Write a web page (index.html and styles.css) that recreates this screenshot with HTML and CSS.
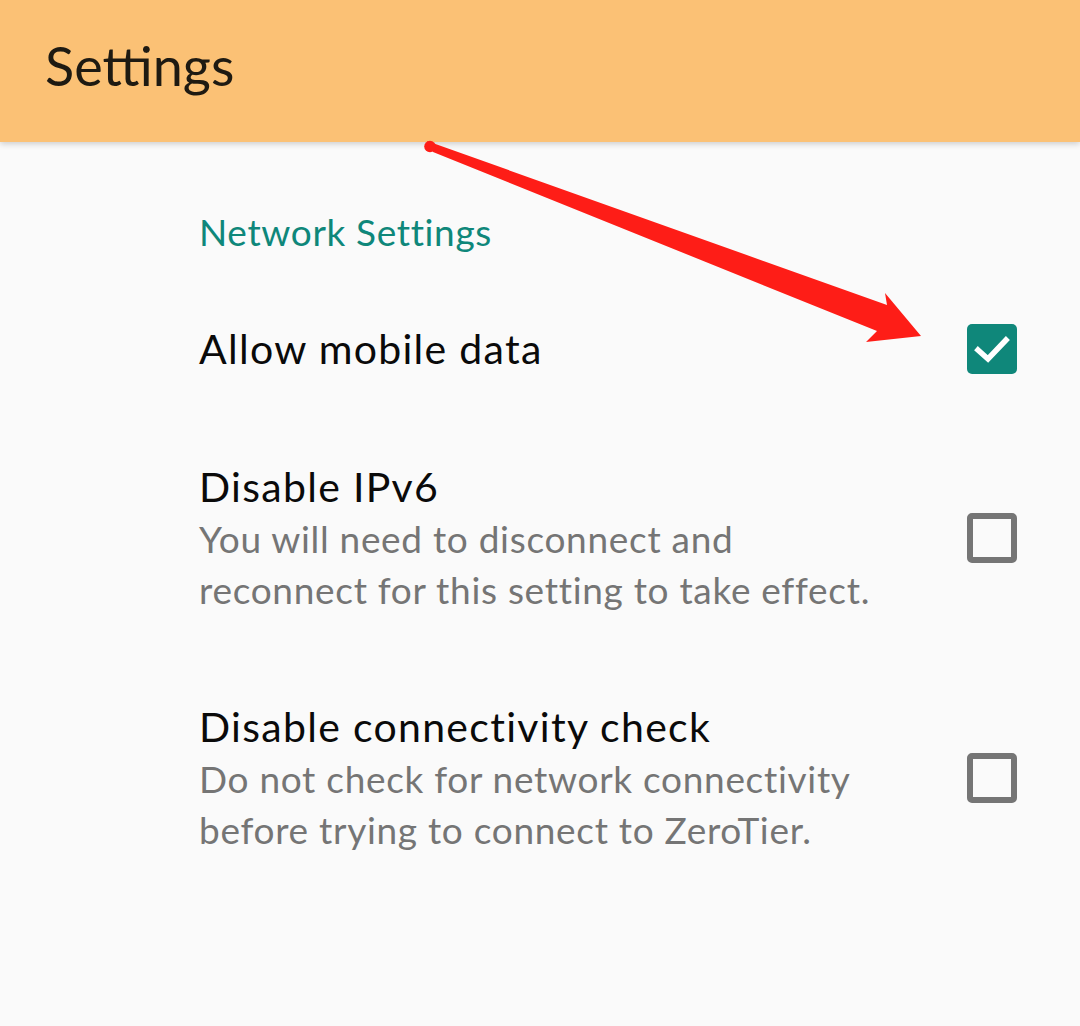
FILE: index.html
```html
<!DOCTYPE html>
<html>
<head>
<meta charset="utf-8">
<link rel="stylesheet" href="styles.css">
</head>
<body>
<div class="app">
  <header class="toolbar"><h1 class="toolbar-title">Settings</h1></header>
  <main class="prefs">
    <div class="category">Network Settings</div>
    <div class="pref">
      <div class="pref-text">
        <div class="pref-title">Allow mobile data</div>
      </div>
      <span class="checkbox checked">
        <svg viewBox="0 0 50 50" width="50" height="50"><path d="M11 26 L21 35 L39 16" fill="none" stroke="#fff" stroke-width="5.5" stroke-linecap="square"/></svg>
      </span>
    </div>
    <div class="pref">
      <div class="pref-text">
        <div class="pref-title">Disable IPv6</div>
        <div class="pref-summary">You will need to disconnect and reconnect for this setting to take effect.</div>
      </div>
      <span class="checkbox"></span>
    </div>
    <div class="pref">
      <div class="pref-text">
        <div class="pref-title">Disable connectivity check</div>
        <div class="pref-summary">Do not check for network connectivity before trying to connect to ZeroTier.</div>
      </div>
      <span class="checkbox"></span>
    </div>
  </main>
  <svg class="arrow" width="1080" height="1026" viewBox="0 0 1080 1026">
    <polygon fill="#fe1d17" points="427,141 887,305 885,293 921,336 866,342 877,331 433,152"/>
    <circle cx="430" cy="146.5" r="5.8" fill="#fe1d17"/>
  </svg>
</div>
</body>
</html>
```
FILE: styles.css
```css
html, body {
  margin: 0;
  padding: 0;
  background: #fafafa;
}
.app {
  position: relative;
  width: 1080px;
  height: 1026px;
  overflow: hidden;
  background: #fafafa;
  font-family: Lato, "Noto Sans", sans-serif;
}
.toolbar {
  height: 142px;
  background: #fbc175;
  box-shadow: 0 2px 6px rgba(0,0,0,0.18);
  display: flex;
  align-items: center;
  padding-left: 45px;
  position: relative;
  z-index: 1;
}
.toolbar-title {
  margin: 0;
  font-weight: 400;
  font-size: 54px;
  color: #1e1a12;
  line-height: 1;
  position: relative;
  top: -5px;
}
.prefs {
  padding-left: 199px;
}
.category {
  color: #0f877a;
  font-size: 37px;
  letter-spacing: 0.65px;
  line-height: 48px;
  padding-top: 66px;
  height: 71px;
}
.pref {
  display: flex;
  align-items: center;
  padding: 43px 63px 42px 0;
}
.pref-text {
  flex: 1;
}
.pref-title {
  font-size: 41px;
  letter-spacing: 1.3px;
  line-height: 53px;
  color: #0a0a0a;
}
.pref-summary {
  font-size: 37px;
  letter-spacing: 0.7px;
  line-height: 51px;
  color: #757575;
  width: 700px;
}
.checkbox {
  width: 38px;
  height: 38px;
  border: 6px solid #757575;
  border-radius: 5px;
  flex: none;
  display: block;
}
.checkbox.checked {
  width: 50px;
  height: 50px;
  border: none;
  background: #0f877a;
}
.checkbox svg { display: block; }
.arrow {
  position: absolute;
  left: 0;
  top: 0;
  z-index: 2;
  pointer-events: none;
}
```
